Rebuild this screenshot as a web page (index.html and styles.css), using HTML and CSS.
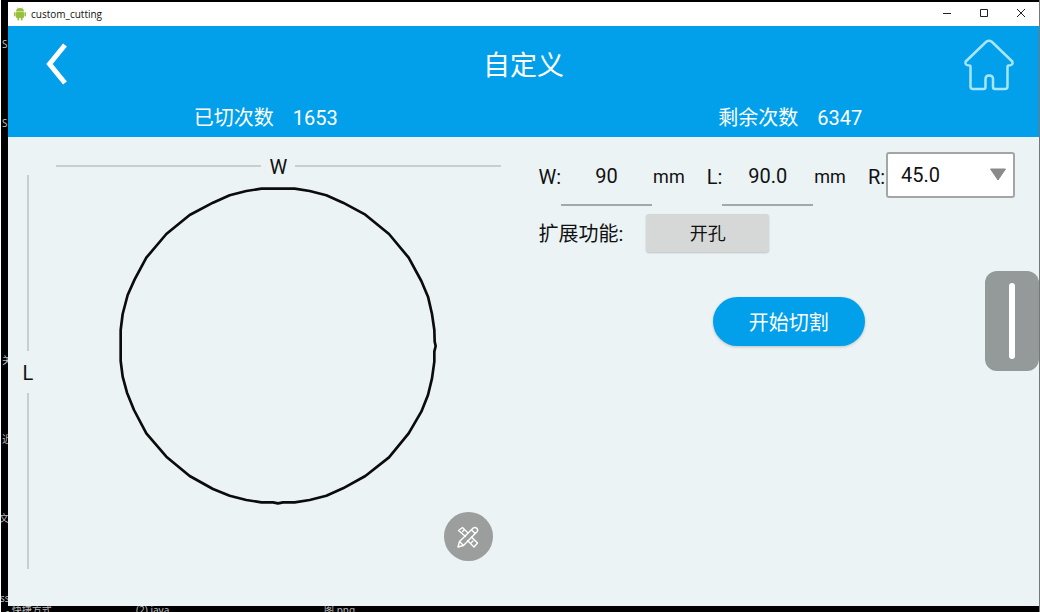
FILE: index.html
```html
<!DOCTYPE html>
<html lang="zh-CN">
<head>
<meta charset="utf-8">
<title>custom_cutting</title>
<link rel="stylesheet" href="styles.css">
</head>
<body>
<div class="desktop" aria-hidden="true">
  <span class="desk-label d1">S</span>
  <span class="desk-label d2">S</span>
  <span class="desk-label d3">关</span>
  <span class="desk-label d4">近</span>
  <span class="desk-label d5">文</span>
  <span class="desk-label d6">ss</span>
  <span class="desk-label d7">- 快捷方式</span>
  <span class="desk-label d8">(2).java</span>
  <span class="desk-label d9">图.png</span>
</div>
<div class="window">
  <div class="titlebar">
    <svg class="app-icon" viewBox="0 0 12 14" width="12" height="14">
      <g fill="#97c03d">
        <path d="M2 4.6a4 3.6 0 0 1 8 0z"/>
        <rect x="2" y="5" width="8" height="6" rx="1"/>
        <rect x="0" y="5" width="1.6" height="4.6" rx=".8"/>
        <rect x="10.4" y="5" width="1.6" height="4.6" rx=".8"/>
        <rect x="3.4" y="9.5" width="1.8" height="4" rx=".8"/>
        <rect x="6.8" y="9.5" width="1.8" height="4" rx=".8"/>
      </g>
      <path d="M3.2.4l1 1.4M8.8.4l-1 1.4" stroke="#97c03d" stroke-width=".6"/>
    </svg>
    <span class="app-name">custom_cutting</span>
    <div class="controls">
      <button type="button" class="control" aria-label="Minimize"><svg viewBox="0 0 10 10" width="10" height="10"><path d="M1 4.500h8"/></svg></button>
      <button type="button" class="control" aria-label="Maximize"><svg viewBox="0 0 10 10" width="10" height="10"><path d="M1.500 .5h7v7h-7z"/></svg></button>
      <button type="button" class="control" aria-label="Close"><svg viewBox="0 0 10 10" width="10" height="10"><path d="M1 0l8 8M9 0l-8 8"/></svg></button>
    </div>
  </div>

  <header class="header">
    <div class="header-top">
      <button type="button" class="icon-button" aria-label="返回">
        <svg viewBox="0 0 22 44" width="22" height="44"><path d="M20 2L4.500 21L20 40" fill="none" stroke="#fff" stroke-width="5"/></svg>
      </button>
      <h1 class="title">自定义</h1>
      <button type="button" class="icon-button" aria-label="主页">
        <svg viewBox="0 0 50 52" width="50" height="52"><path d="M22.500 2.500Q25 .8 27.500 2.500L48.300 22.500Q49.500 26.500 44.500 26.500Q43.500 26.500 43.500 28V47.500Q43.500 50 41 50H31Q29 50 29 48V40Q29 36.500 25 36.500Q21.500 36.500 21.500 40V48Q21.500 50 19.500 50H9Q6.500 50 6.500 47.500V28Q6.500 26.500 5.500 26.500Q.5 26.500 1.700 22.500Z" fill="none" stroke="#a8e6fb" stroke-width="2.500" stroke-linejoin="round"/></svg>
      </button>
    </div>
    <div class="counters">
      <div class="counter"><span>已切次数</span><span>1653</span></div>
      <div class="counter counter-left"><span>剩余次数</span><span>6347</span></div>
    </div>
  </header>

  <main class="main">
    <section class="preview">
      <div class="width-rule"><span>W</span></div>
      <div class="length-rule"><span>L</span></div>
      <div class="drawing">
        <svg class="shape" viewBox="49 102 972 972"><polygon fill="none" stroke="#0b0b0b" stroke-width="8" stroke-linejoin="round" points="485,116 585,116 630,123 680,136 730,158 797,194 868,252 927,323 965,393 985,440 997,492 1004,540 1005,575 1008,588 1004,605 1004,635 997,685 985,735 965,785 927,850 868,922 797,978 730,1015 680,1037 630,1050 585,1057 550,1057 535,1060 520,1057 485,1057 440,1050 390,1037 340,1017 270,978 200,920 140,850 103,780 82,728 69,680 63,633 63,540 69,492 84,435 105,388 140,323 200,252 270,195 340,158 390,136 440,123"/></svg>
        <button type="button" class="edit-button" aria-label="编辑">
          <svg viewBox="0 0 22 22" width="22" height="22" fill="none" stroke="#fff" stroke-width="1.400" stroke-linejoin="round" stroke-linecap="round">
            <path d="M8.500 10.500L1.500 4.500L5.500 1.500L11 7M14.500 11L20.500 17L17 21L10.500 14.500M5.500 5.500l1.500-1.500M14.500 16.500l1.500-1.500"/>
            <path d="M1 21L2.500 15.500L16.500 1.800Q18.500 .8 20 2.500Q21.300 4.200 20 5.800L6.500 19.500ZM2.500 15.500L6.500 19.500M14.500 3.800L18 7.500"/>
          </svg>
        </button>
      </div>
    </section>

    <form class="settings">
      <div class="dimensions">
        <label for="width">W:</label>
        <input class="field" id="width" type="text" value="90">
        <span class="unit">mm</span>
        <label for="length">L:</label>
        <input class="field" id="length" type="text" value="90.0">
        <span class="unit">mm</span>
        <label for="radius">R:</label>
        <div class="select-box">
          <select class="select" id="radius"><option>45.0</option></select>
          <svg class="caret" viewBox="0 0 18 13" width="18" height="13"><path d="M1.500 1h15L9 12z" fill="#8a8a8a" stroke="#8a8a8a" stroke-linejoin="round"/></svg>
        </div>
      </div>
      <div class="extension">
        <span>扩展功能:</span>
        <button type="button" class="hole-button">开孔</button>
      </div>
      <button type="button" class="start-button">开始切割</button>
    </form>
    <button type="button" class="side-handle" aria-label="展开侧栏"><span class="handle-bar"></span></button>
  </main>
</div>
</body>
</html>
```
FILE: styles.css
```css
* {
  box-sizing: border-box;
}

body {
  margin: 0;
  min-height: 100vh;
  padding: 2px 1px 6px 8px;
  display: flex;
  background: #000;
  color: #111;
  font: 20px/24px Roboto, "Noto Sans CJK SC", sans-serif;
}

button,
input,
select {
  margin: 0;
  padding: 0;
  border: 0;
  color: inherit;
  font: inherit;
}

button {
  background: none;
}

svg {
  display: block;
}

.desktop {
  position: absolute;
  inset: 0;
  overflow: hidden;
  border-left: 1px solid #fff;
  border-right: 1px solid #777;
  color: #bbb;
  font: 10px/12px "Noto Sans", "Noto Sans CJK SC", sans-serif;
}

.desk-label {
  position: absolute;
  left: 1px;
  white-space: nowrap;
}

.d1 { top: 38px; }
.d2 { top: 117px; }
.d3 { top: 354px; }
.d4 { top: 433px; }
.d5 { top: 512px; left: -2px; }
.d6 { top: 592px; left: -1px; }
.d7 { top: 604px; left: 5px; }
.d8 { top: 604px; left: 135px; }
.d9 { top: 604px; left: 323px; }

.window {
  position: relative;
  flex: 1;
  display: flex;
  flex-direction: column;
  background: #ebf3f5;
}

.titlebar {
  display: flex;
  align-items: center;
  height: 24px;
  padding-left: 6px;
  background: #fff;
}

.app-name {
  margin-left: 5px;
  font: 10px/16px "Open Sans", sans-serif;
}

.controls {
  display: flex;
  margin-left: auto;
}

.control {
  display: grid;
  place-items: center;
  width: 37px;
  height: 24px;
}

.control svg {
  fill: none;
  stroke: #222;
}

.header {
  height: 111px;
  background: #02a0eb;
  color: #fff;
}

.header-top {
  display: flex;
  align-items: center;
  justify-content: space-between;
  height: 78px;
  padding: 0 25px 0 23px;
}

.icon-button {
  display: grid;
  place-items: center;
  width: 50px;
  height: 52px;
}

.title {
  margin: 0;
  padding: 2px 0 0 2px;
  font-size: 27px;
  font-weight: 400;
  line-height: 36px;
}

.counters {
  display: grid;
  grid-template-columns: 1fr 1fr;
  padding-top: 2px;
}

.counter {
  display: flex;
  justify-content: center;
  gap: 19px;
}

.counter-left {
  padding-left: 18px;
}

.main {
  position: relative;
  flex: 1;
  display: grid;
  grid-template-columns: 1fr 1fr;
}

.preview {
  display: grid;
  grid-template-columns: 20px 1fr;
  grid-template-rows: 18px 1fr;
  column-gap: 18px;
  padding: 20px 23px 37px 10px;
}

.width-rule,
.length-rule {
  display: flex;
  align-items: center;
}

.width-rule {
  grid-column: 2;
  gap: 8px;
}

.width-rule span,
.length-rule span {
  padding-top: 2px;
}

.width-rule::before,
.width-rule::after {
  content: "";
  flex: 1;
  height: 2px;
  background: #cacccd;
}

.length-rule {
  flex-direction: column;
  gap: 8px;
}

.length-rule::before,
.length-rule::after {
  content: "";
  flex: 1;
  width: 2px;
  background: #cacccd;
}

.drawing {
  position: relative;
  padding-top: 9px;
}

.shape {
  width: 324px;
  max-width: 100%;
  margin: 0 auto;
}

.edit-button {
  position: absolute;
  right: 8px;
  bottom: 8px;
  display: grid;
  place-items: center;
  width: 49px;
  height: 49px;
  border-radius: 50%;
  background: #9c9d9d;
}

.settings {
  display: flex;
  flex-direction: column;
  align-items: flex-start;
  padding: 10px 0 0 15px;
}

.dimensions {
  display: flex;
  align-items: center;
}

.field {
  width: 91px;
  height: 59px;
  border-bottom: 2px solid #a3a8a9;
  background: none;
  text-align: center;
}

.unit {
  margin: 0 22px 0 1px;
  font-size: 18px;
}

.select-box {
  position: relative;
  margin: 0 0 4px 1px;
}

.select {
  display: block;
  width: 129px;
  height: 46px;
  padding-left: 13px;
  border: 2px solid #a4a6a6;
  border-radius: 3px;
  background: #fff;
  appearance: none;
}

.caret {
  position: absolute;
  top: 16px;
  right: 8px;
  pointer-events: none;
}

.extension {
  display: flex;
  align-items: center;
  gap: 23px;
  padding-top: 8px;
}

.extension span,
.hole-button,
.start-button {
  padding-top: 2px;
}

.hole-button {
  width: 123px;
  height: 38px;
  border-radius: 3px;
  background: #d6d7d7;
  box-shadow: 0 1px 2px #0003;
  font-size: 18px;
}

.start-button {
  align-self: center;
  width: 152px;
  height: 49px;
  margin-top: 45px;
  border-radius: 25px;
  background: #02a0eb;
  box-shadow: 0 1px 3px #0003;
  color: #fff;
}

.side-handle {
  position: absolute;
  top: 134px;
  right: 0;
  display: grid;
  place-items: center;
  width: 54px;
  height: 100px;
  border-radius: 12px;
  background: #949999;
}

.handle-bar {
  width: 6px;
  height: 76px;
  border-radius: 3px;
  background: #fff;
}
```
